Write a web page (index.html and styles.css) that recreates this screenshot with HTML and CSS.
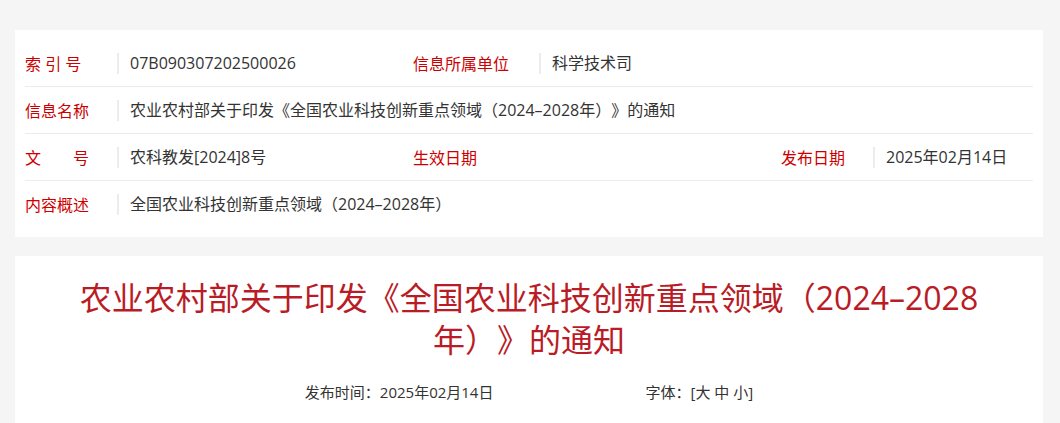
FILE: index.html
```html
<!DOCTYPE html>
<html lang="zh-CN">
<head>
  <meta charset="UTF-8" />
  <meta name="viewport" content="width=device-width, initial-scale=1.0" />
  <title>农业农村部关于印发《全国农业科技创新重点领域（2024–2028年）》的通知</title>
  <link rel="stylesheet" href="styles.css">
</head>
<body>
  <div class="page">
    <div class="card info">
      <div class="row">
        <div class="cell c1"><span class="label">索 引 号</span><span class="value">07B090307202500026</span></div>
        <div class="cell c2"><span class="label">信息所属单位</span><span class="value">科学技术司</span></div>
      </div>
      <div class="row">
        <div class="cell wide"><span class="label">信息名称</span><span class="value">农业农村部关于印发《全国农业科技创新重点领域（2024–2028年）》的通知</span></div>
      </div>
      <div class="row">
        <div class="cell c1"><span class="label">文　　号</span><span class="value">农科教发[2024]8号</span></div>
        <div class="cell c2"><span class="label">生效日期</span></div>
        <div class="cell c3"><span class="label">发布日期</span><span class="value">2025年02月14日</span></div>
      </div>
      <div class="row">
        <div class="cell wide"><span class="label">内容概述</span><span class="value">全国农业科技创新重点领域（2024–2028年）</span></div>
      </div>
    </div>

    <div class="card article">
      <h1>农业农村部关于印发《全国农业科技创新重点领域（2024–2028年）》的通知</h1>
      <div class="meta">
        <span>发布时间：2025年02月14日</span>
        <span>字体：[<a href="#">大</a> <a href="#">中</a> <a href="#">小</a>]</span>
      </div>
    </div>
  </div>
</body>
</html>
```

FILE: styles.css
```css
:root {
  --bg: #f5f5f5;
  --card-bg: #ffffff;
  --line: #ececec;
  --label: #cc0000;
  --title: #b91c26;
  --text: #333;
}
body {
  margin: 0;
  background: var(--bg);
  color: var(--text);
  font-family: "Open Sans", "Noto Sans CJK SC", sans-serif;
  text-spacing-trim: space-all;
}
.page {
  width: 1028px;
  margin-left: 15px;
  padding-top: 30px;
}
.card {
  background: var(--card-bg);
}

/* 信息表 */
.info { padding: 10px; }
.row {
  display: flex;
  height: 46px;
  border-bottom: 1px solid var(--line);
  font-size: 16px;
}
.row:last-child { border-bottom: none; }
.cell {
  display: flex;
  align-items: center;
  white-space: nowrap;
}
.c1 { width: 388px; }
.c2 { width: 368px; }
.c3 { flex: 1; }
.wide { flex: 1; }
.label {
  color: var(--label);
  width: 92px;
  flex-shrink: 0;
}
.c2 .label { width: 126px; }
.value {
  border-left: 2px solid var(--line);
  padding-left: 11px;
  line-height: 21px;
}

/* 正文 */
.article {
  margin-top: 19px;
  padding: 21px 60px 40px;
}
.article h1 {
  margin: 0;
  font-size: 32px;
  font-weight: normal;
  line-height: 42px;
  color: var(--title);
  text-align: center;
}
.meta {
  display: flex;
  justify-content: center;
  gap: 152px;
  margin-top: 16px;
  font-size: 15px;
  line-height: 30px;
}
.meta a {
  color: var(--text);
  text-decoration: none;
}
```
